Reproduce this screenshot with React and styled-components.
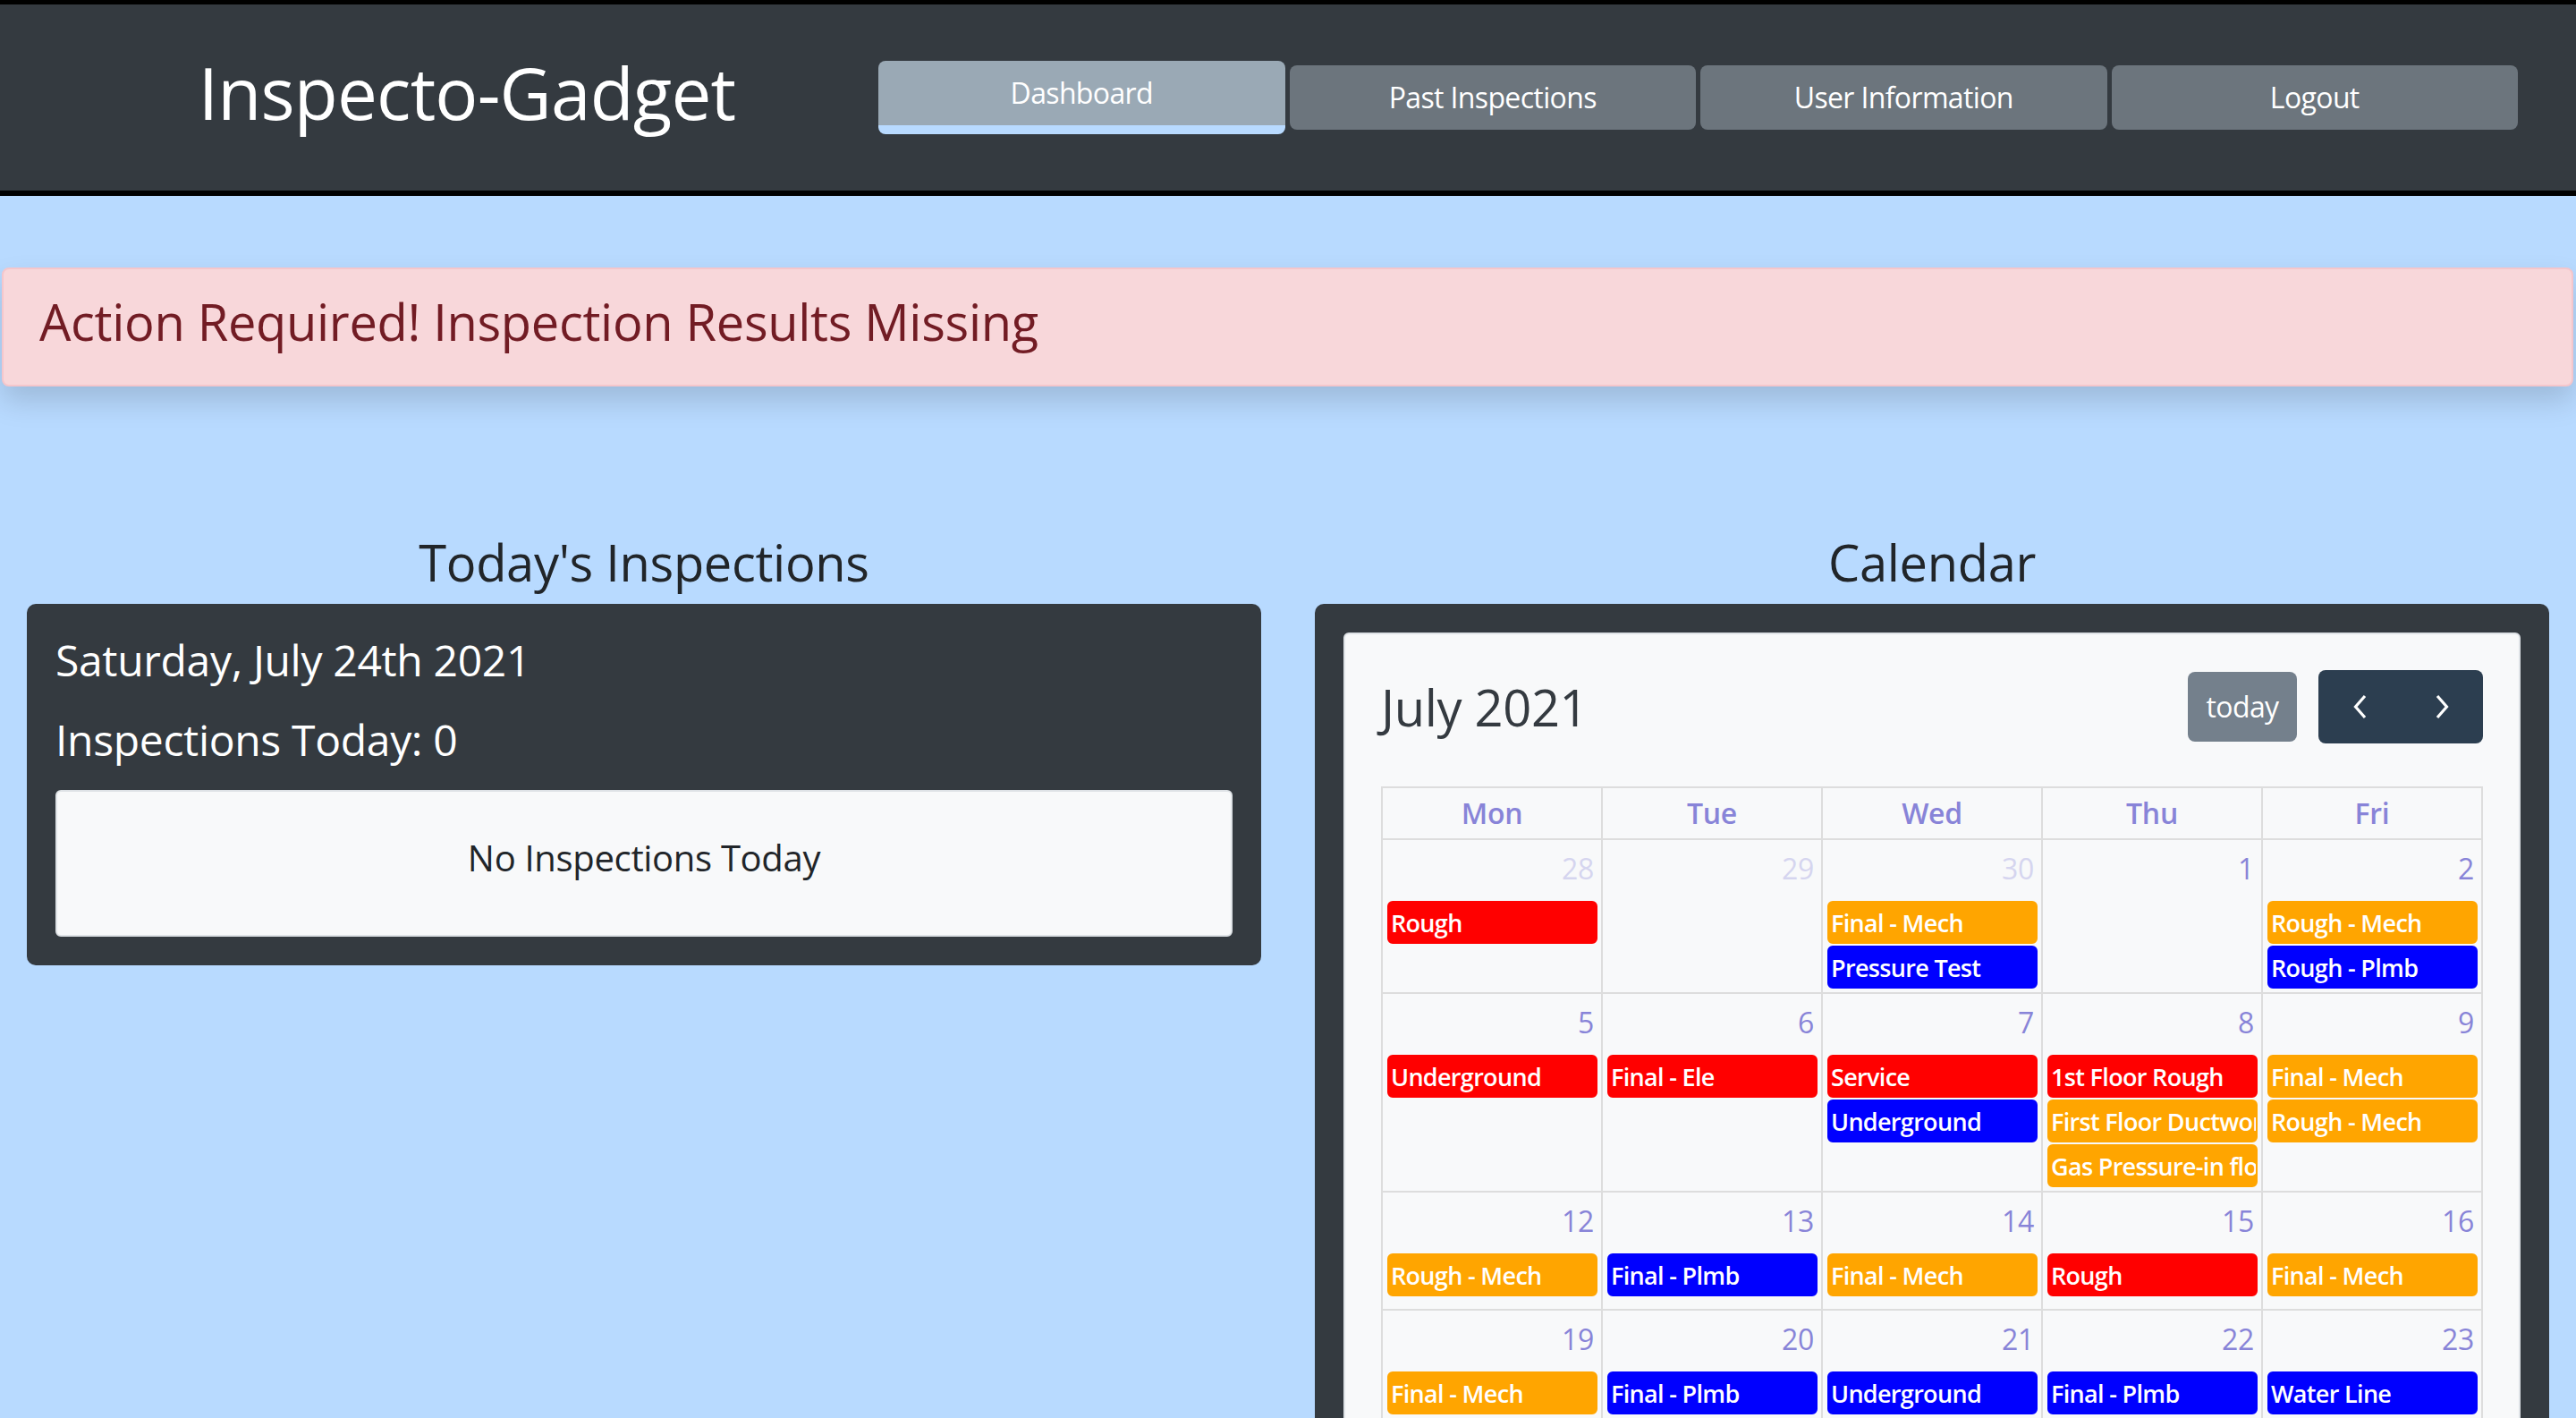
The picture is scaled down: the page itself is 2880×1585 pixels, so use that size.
import React from "react";
import styled, { createGlobalStyle } from "styled-components";

const GlobalStyle = createGlobalStyle`
  * {
    box-sizing: border-box;
  }
  html,
  body {
    margin: 0;
    padding: 0;
  }
  body {
    background: #b8daff;
    font-family: "Open Sans", "Noto Sans", sans-serif;
    letter-spacing: -0.02em;
    color: #212529;
  }
`;

const Navbar = styled.nav`
  display: flex;
  align-items: center;
  height: 219px;
  padding-right: 65px;
  background: #343a40;
  border-top: 5px solid #000;
  border-bottom: 6px solid #000;
`;

const Brand = styled.h1`
  flex: 0 0 982px;
  margin: 0 0 12px;
  padding-left: 62px;
  text-align: center;
  font-size: 80px;
  font-weight: 500;
  line-height: 96px;
  letter-spacing: -0.01em;
  color: #fff;
`;

const NavButtons = styled.div`
  flex: 1;
  display: flex;
  align-items: center;
  gap: 5px;
`;

const NavButton = styled.button`
  flex: 1;
  height: ${(p) => (p.$active ? 82 : 72)}px;
  padding: 0;
  border: none;
  border-bottom: ${(p) => (p.$active ? "10px solid #b8daff" : "none")};
  border-radius: 8px;
  background: ${(p) => (p.$active ? "#9aa9b5" : "#6c757d")};
  color: #fff;
  font-family: inherit;
  font-size: 32px;
  line-height: 48px;
  letter-spacing: -0.02em;
`;

const Alert = styled.div`
  margin: 80px 3px 0 2px;
  padding: 25px 40px 21px;
  background: #f8d7da;
  border: 2px solid #f5c6cb;
  border-radius: 8px;
  box-shadow: 0 16px 32px rgba(0, 0, 0, 0.15);
`;

const AlertText = styled.h3`
  margin: 0 0 16px;
  font-size: 56px;
  font-weight: 400;
  line-height: 67px;
  color: #721c24;
`;

const Main = styled.main`
  display: grid;
  grid-template-columns: 1fr 1fr;
  margin-top: 163px;
`;

const Column = styled.section`
  padding: 0 30px;
`;

const SectionTitle = styled.h3`
  margin: 0 0 13px;
  text-align: center;
  font-size: 56px;
  font-weight: 400;
  line-height: 67px;
`;

const DarkCard = styled.div`
  padding: 32px;
  background: #343a40;
  border-radius: 10px;
  color: #fff;
`;

const InfoLine = styled.h4`
  margin: 0 0 ${(p) => p.$gap}px;
  padding-top: 2px;
  font-size: 48px;
  font-weight: 500;
  line-height: 58px;
`;

const EmptyBox = styled.div`
  display: flex;
  align-items: center;
  justify-content: center;
  height: 164px;
  padding-bottom: 12px;
  background: #f8f9fa;
  border: 2px solid #dee2e6;
  border-radius: 6px;
  color: #212529;
`;

const EmptyText = styled.h5`
  margin: 0;
  font-size: 40px;
  font-weight: 500;
  line-height: 48px;
`;

const CalendarCard = styled.div`
  padding: 40px;
  background: #f8f9fa;
  border: 2px solid #dee2e6;
  border-radius: 6px;
  color: #212529;
`;

const Toolbar = styled.div`
  display: flex;
  align-items: center;
  justify-content: space-between;
  height: 82px;
  margin-bottom: 48px;
`;

const MonthTitle = styled.h2`
  margin: 0;
  font-size: 56px;
  font-weight: 500;
  line-height: 67px;
  color: #343a40;
`;

const ToolbarActions = styled.div`
  display: flex;
  align-items: center;
  gap: 24px;
`;

const TodayButton = styled.button`
  width: 122px;
  height: 78px;
  padding: 0;
  border: none;
  border-radius: 8px;
  background: #74808c;
  color: #fff;
  font-family: inherit;
  font-size: 32px;
  line-height: 48px;
  letter-spacing: -0.02em;
`;

const ArrowGroup = styled.div`
  display: flex;
  height: 82px;
  background: #2c3e50;
  border-radius: 8px;
  overflow: hidden;
`;

const ArrowButton = styled.button`
  display: flex;
  align-items: center;
  justify-content: center;
  width: 92px;
  height: 100%;
  padding: 0;
  border: none;
  background: transparent;
`;

const CalGrid = styled.div`
  display: grid;
  grid-template-columns: repeat(5, 1fr);
  border-top: 2px solid #dddddd;
  border-left: 2px solid #dddddd;
`;

const HeadCell = styled.div`
  padding: 4px;
  border-right: 2px solid #dddddd;
  border-bottom: 2px solid #dddddd;
  text-align: center;
  font-size: 32px;
  font-weight: 600;
  line-height: 48px;
  color: #8884d8;
`;

const DayCell = styled.div`
  display: flex;
  flex-direction: column;
  min-width: 0;
  min-height: 132px;
  padding-bottom: 4px;
  border-right: 2px solid #dddddd;
  border-bottom: 2px solid #dddddd;
`;

const DayNumber = styled.div`
  padding: 8px;
  text-align: right;
  font-size: 32px;
  line-height: 48px;
  color: #8884d8;
  opacity: ${(p) => (p.$other ? 0.3 : 1)};
`;

const EventList = styled.div`
  display: flex;
  flex-direction: column;
  gap: 2px;
  margin-top: 4px;
`;

const EVENT_COLORS = { r: "#ff0000", o: "#ffa500", b: "#0000ff" };

const Event = styled.div`
  height: 48px;
  margin: 0 4px 0 5px;
  padding: 3px 2px 1px;
  background: ${(p) => EVENT_COLORS[p.$kind]};
  border: 2px solid ${(p) => EVENT_COLORS[p.$kind]};
  border-radius: 6px;
  overflow: hidden;
  white-space: nowrap;
  font-size: 27px;
  font-weight: 600;
  line-height: 40px;
  letter-spacing: -0.025em;
  color: #fff;
`;

const Chevron = ({ dir }) => (
  <svg width="17" height="28" viewBox="0 0 17 28" fill="none">
    <path
      d={dir === "left" ? "M14 2 L3.5 14 L14 26" : "M3 2 L13.5 14 L3 26"}
      stroke="#fff"
      strokeWidth="3.2"
    />
  </svg>
);

const DAYS = ["Mon", "Tue", "Wed", "Thu", "Fri"];

const weeks = [
  [
    { d: 28, other: true, ev: [["Rough", "r"]] },
    { d: 29, other: true, ev: [] },
    { d: 30, other: true, ev: [["Final - Mech", "o"], ["Pressure Test", "b"]] },
    { d: 1, ev: [] },
    { d: 2, ev: [["Rough - Mech", "o"], ["Rough - Plmb", "b"]] },
  ],
  [
    { d: 5, ev: [["Underground", "r"]] },
    { d: 6, ev: [["Final - Ele", "r"]] },
    { d: 7, ev: [["Service", "r"], ["Underground", "b"]] },
    {
      d: 8,
      ev: [
        ["1st Floor Rough", "r"],
        ["First Floor Ductwork", "o"],
        ["Gas Pressure-in floor", "o"],
      ],
    },
    { d: 9, ev: [["Final - Mech", "o"], ["Rough - Mech", "o"]] },
  ],
  [
    { d: 12, ev: [["Rough - Mech", "o"]] },
    { d: 13, ev: [["Final - Plmb", "b"]] },
    { d: 14, ev: [["Final - Mech", "o"]] },
    { d: 15, ev: [["Rough", "r"]] },
    { d: 16, ev: [["Final - Mech", "o"]] },
  ],
  [
    { d: 19, ev: [["Final - Mech", "o"]] },
    { d: 20, ev: [["Final - Plmb", "b"]] },
    { d: 21, ev: [["Underground", "b"]] },
    { d: 22, ev: [["Final - Plmb", "b"]] },
    { d: 23, ev: [["Water Line", "b"]] },
  ],
  [
    { d: 26, ev: [] },
    { d: 27, ev: [] },
    { d: 28, ev: [] },
    { d: 29, ev: [] },
    { d: 30, ev: [] },
  ],
];

const App = () => {
  return (
    <>
      <GlobalStyle />
      <Navbar>
        <Brand>Inspecto-Gadget</Brand>
        <NavButtons>
          <NavButton $active>Dashboard</NavButton>
          <NavButton>Past Inspections</NavButton>
          <NavButton>User Information</NavButton>
          <NavButton>Logout</NavButton>
        </NavButtons>
      </Navbar>

      <Alert>
        <AlertText>Action Required! Inspection Results Missing</AlertText>
      </Alert>

      <Main>
        <Column>
          <SectionTitle>Today's Inspections</SectionTitle>
          <DarkCard>
            <InfoLine $gap={29}>Saturday, July 24th 2021</InfoLine>
            <InfoLine $gap={27}>Inspections Today: 0</InfoLine>
            <EmptyBox>
              <EmptyText>No Inspections Today</EmptyText>
            </EmptyBox>
          </DarkCard>
        </Column>

        <Column>
          <SectionTitle>Calendar</SectionTitle>
          <DarkCard>
            <CalendarCard>
              <Toolbar>
                <MonthTitle>July 2021</MonthTitle>
                <ToolbarActions>
                  <TodayButton>today</TodayButton>
                  <ArrowGroup>
                    <ArrowButton>
                      <Chevron dir="left" />
                    </ArrowButton>
                    <ArrowButton>
                      <Chevron dir="right" />
                    </ArrowButton>
                  </ArrowGroup>
                </ToolbarActions>
              </Toolbar>
              <CalGrid>
                {DAYS.map((day) => (
                  <HeadCell key={day}>{day}</HeadCell>
                ))}
                {weeks.map((week) =>
                  week.map((cell) => (
                    <DayCell key={`${cell.other ? "p" : "c"}-${cell.d}`}>
                      <DayNumber $other={cell.other}>{cell.d}</DayNumber>
                      <EventList>
                        {cell.ev.map(([title, kind], i) => (
                          <Event key={i} $kind={kind}>
                            {title}
                          </Event>
                        ))}
                      </EventList>
                    </DayCell>
                  ))
                )}
              </CalGrid>
            </CalendarCard>
          </DarkCard>
        </Column>
      </Main>
    </>
  );
};

export default App;
